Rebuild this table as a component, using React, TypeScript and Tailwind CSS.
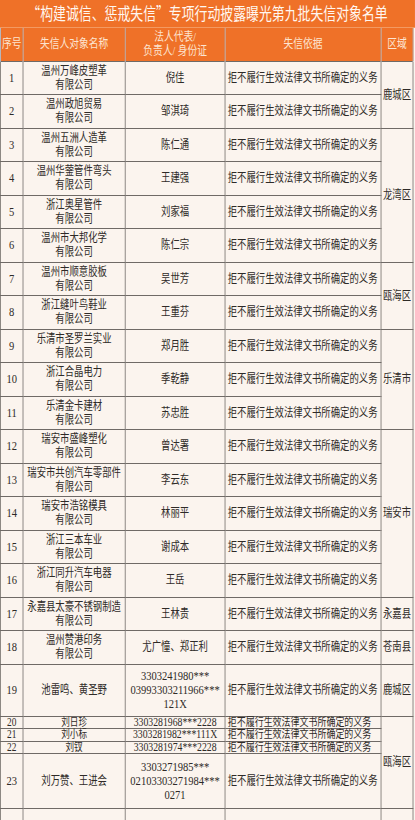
import type { FC } from 'react'

// 名单数据：序号 / 失信人对象名称 / 法人代表 / 区域（区域按合并单元格给出行数）
type Row = {
  no: number
  name: string[]
  rep: string[]
  tight?: boolean
  h: string
  region?: [string, number]
}

const H = 'h-[33.5px]'

const ROWS: Row[] = [
  { no: 1, name: ['温州万峰皮塑革', '有限公司'], rep: ['倪佳'], h: H, region: ['鹿城区', 2] },
  { no: 2, name: ['温州政旭贸易', '有限公司'], rep: ['邹淇琦'], h: H },
  { no: 3, name: ['温州五洲人造革', '有限公司'], rep: ['陈仁通'], h: H, region: ['龙湾区', 4] },
  { no: 4, name: ['温州华蓥管件弯头', '有限公司'], rep: ['王建强'], h: H },
  { no: 5, name: ['浙江奥星管件', '有限公司'], rep: ['刘家福'], h: H },
  { no: 6, name: ['温州市大邦化学', '有限公司'], rep: ['陈仁宗'], h: H },
  { no: 7, name: ['温州市顺意胶板', '有限公司'], rep: ['吴世芳'], h: H, region: ['瓯海区', 2] },
  { no: 8, name: ['浙江缝叶鸟鞋业', '有限公司'], rep: ['王重芬'], h: H },
  { no: 9, name: ['乐清市圣罗兰实业', '有限公司'], rep: ['郑月胜'], h: H, region: ['乐清市', 3] },
  { no: 10, name: ['浙江合晶电力', '有限公司'], rep: ['季乾静'], h: H },
  { no: 11, name: ['乐清金卡建材', '有限公司'], rep: ['苏忠胜'], h: H },
  { no: 12, name: ['瑞安市盛峰塑化', '有限公司'], rep: ['曾达署'], h: H, region: ['瑞安市', 5] },
  { no: 13, name: ['瑞安市共创汽车零部件', '有限公司'], rep: ['李云东'], h: H },
  { no: 14, name: ['瑞安市浩铭模具', '有限公司'], rep: ['林丽平'], h: H },
  { no: 15, name: ['浙江三本车业', '有限公司'], rep: ['谢成本'], h: H },
  { no: 16, name: ['浙江同升汽车电器', '有限公司'], rep: ['王岳'], h: H },
  { no: 17, name: ['永嘉县太豪不锈钢制造', '有限公司'], rep: ['王林贵'], h: H, region: ['永嘉县', 1] },
  { no: 18, name: ['温州赞港印务', '有限公司'], rep: ['尤广憧、郑正利'], h: H, region: ['苍南县', 1] },
  {
    no: 19,
    name: ['池雷鸣、黄圣野'],
    rep: ['3303241980***', '03993303211966***', '121X'],
    h: 'h-[52px]',
    region: ['鹿城区', 1],
  },
  { no: 20, name: ['刘日珍'], rep: ['3303281968***2228'], tight: true, h: 'h-[12.5px]', region: ['瓯海区', 4] },
  { no: 21, name: ['刘小标'], rep: ['3303281982***111X'], tight: true, h: 'h-[12.5px]' },
  { no: 22, name: ['刘钗'], rep: ['3303281974***2228'], tight: true, h: 'h-[12.5px]' },
  {
    no: 23,
    name: ['刘万赞、王进会'],
    rep: ['3303271985***', '02103303271984***', '0271'],
    h: 'h-[55px]',
  },
]

const BASIS = '拒不履行生效法律文书所确定的义务'

const cell = 'border border-[#6f6a66] p-0 align-middle'

export const App: FC = () => {
  return (
    <div className="w-[415px] h-[820px] overflow-hidden bg-[#fbf4ee] font-['Liberation_Serif','Noto_Sans_CJK_SC',serif] text-[#2e2a27]">
      {/* 原图整体横向压缩，按 0.78 缩放 */}
      <div className="w-[532px] origin-top-left scale-x-[0.78]">
        <div className="h-[28px] bg-[#ef7128] flex items-center justify-center text-[16.5px] leading-none text-[#fff7f0] border-b border-[#f39a62] font-['Noto_Sans_CJK_SC',sans-serif]">
          “构建诚信、惩戒失信”专项行动披露曝光第九批失信对象名单
        </div>
        <table className="w-[529px] table-fixed border-collapse">
          <colgroup>
            <col className="w-[29px]" />
            <col className="w-[131px]" />
            <col className="w-[128px]" />
            <col className="w-[200px]" />
            <col className="w-[41px]" />
          </colgroup>
          <thead>
            <tr className="h-[33px] bg-[#ef7128] text-[#fde4d0] text-[12.5px] leading-[14px]">
              <th className="border-x border-[#a3adbb] p-0 font-normal">序号</th>
              <th className="border-x border-[#a3adbb] p-0 font-normal">失信人对象名称</th>
              <th className="border-x border-[#a3adbb] p-0 font-normal">
                法人代表/
                <br />
                负责人/ 身份证
              </th>
              <th className="border-x border-[#a3adbb] p-0 font-normal">失信依据</th>
              <th className="border-x border-[#a3adbb] p-0 font-normal">区域</th>
            </tr>
          </thead>
          <tbody className="text-[12px] leading-[14px]">
            {ROWS.map((r) => {
              const t = r.tight
              return (
                <tr key={r.no} className={r.h}>
                  <td
                    className={`${cell} text-center ${t ? 'text-[12px] leading-[11px]' : 'text-[13.5px]'}`}
                  >
                    {r.no}
                  </td>
                  <td className={`${cell} text-center ${t ? 'text-[11px] leading-[11px]' : ''}`}>
                    {r.name.map((s, i) => (
                      <div key={i}>{s}</div>
                    ))}
                  </td>
                  <td
                    className={`${cell} text-center ${t ? 'text-[12.5px] leading-[11px]' : 'text-[13.5px] leading-[14px]'}`}
                  >
                    {r.rep.map((s, i) => (
                      <div key={i} className={/\d/.test(s) ? '' : 'text-[12px]'}>
                        {s}
                      </div>
                    ))}
                  </td>
                  <td
                    className={`${cell} pl-[3px] whitespace-nowrap ${t ? 'text-[11.5px] leading-[11px]' : ''}`}
                  >
                    {BASIS}
                  </td>
                  {r.region && (
                    <td rowSpan={r.region[1]} className={`${cell} text-center`}>
                      {r.region[0]}
                    </td>
                  )}
                </tr>
              )
            })}
            <tr className="h-[30px]">
              <td className={cell} />
              <td className={cell} />
              <td className={cell} />
              <td className={cell} />
              <td className={cell} />
            </tr>
          </tbody>
        </table>
      </div>
    </div>
  )
}

export default App
